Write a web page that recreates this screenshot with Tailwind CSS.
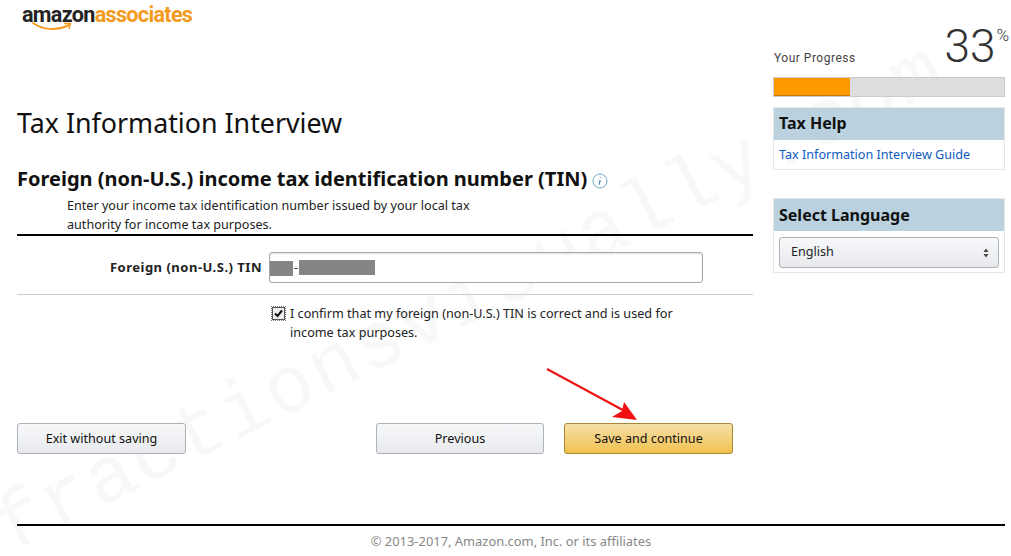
<!DOCTYPE html>
<html lang="en">
<head>
    <meta charset="UTF-8">
    <meta name="viewport" content="width=device-width, initial-scale=1.0">
    <title>Tax Information Interview</title>
    <script src="https://cdn.jsdelivr.net/npm/@tailwindcss/browser@4"></script>
</head>
<body class="bg-white font-['Noto_Sans',sans-serif] text-[#222] overflow-hidden">
    <div class="relative w-[1011px] h-[556px] overflow-hidden">
        <!-- watermark -->
        <div class="absolute left-[-55px] top-[260px] w-[1050px] text-center origin-center rotate-[-26.5deg] font-['Liberation_Mono',monospace] text-[80px] leading-none tracking-[2px] text-[#f8f8f8] whitespace-nowrap pointer-events-none">fractionsvisually.com</div>

        <div class="relative pl-[17px] pr-[6px] flex gap-[20px]">
            <!-- left column -->
            <div class="w-[736px] shrink-0">
                <div class="relative h-[32px] pl-[5px] pt-[1px] text-[21.6px] leading-[28px] font-bold tracking-[-0.7px] font-['Roboto',sans-serif]">
                    <span class="text-[#222]">amazon</span><span class="text-[#f49a1e]">associates</span>
                    <svg class="absolute left-[15px] top-[21px]" width="56" height="11" viewBox="0 0 56 11" fill="none">
                        <path d="M1 2 C 11 9, 25 10, 37 4" stroke="#f49a1e" stroke-width="2" stroke-linecap="round"/>
                        <path d="M32 2.5 L 38.5 2.5 L 37 8" stroke="#f49a1e" stroke-width="1.4" fill="none"/>
                    </svg>
                </div>

                <h1 class="mt-[73px] text-[26.8px] leading-[36px] font-normal text-[#111]">Tax Information Interview</h1>

                <div class="mt-[24px] flex items-center gap-[5px]">
                    <h2 class="text-[20px] leading-[28px] font-bold text-[#111]">Foreign (non-U.S.) income tax identification number (TIN)</h2>
                    <svg class="mt-[3px]" width="16" height="16" viewBox="0 0 16 16" fill="none">
                        <circle cx="8" cy="8" r="7" stroke="#6ea6c6" stroke-width="1"/>
                        <path d="M8.4 4.2v.9M8.2 7l-1 4.6" stroke="#4f8db3" stroke-width="1.3"/>
                    </svg>
                </div>

                <p class="pl-[50px] mt-[3px] w-[500px] text-[12.6px] leading-[19px]">Enter your income tax identification number issued by your local tax authority for income tax purposes.</p>

                <div class="border-t-2 border-black"></div>

                <div class="h-[59px] pt-[16px] flex items-start border-b border-[#ccc]">
                    <label class="w-[245px] mr-[7px] mt-[6px] text-right text-[13px] leading-[18px] tracking-[0.5px] font-bold shrink-0">Foreign (non-U.S.) TIN</label>
                    <div class="w-[434px] h-[31px] border border-[#a6a6a6] rounded-[3px] flex items-center shadow-[inset_0_1px_2px_rgba(0,0,0,0.12)] bg-white">
                        <span class="w-[23px] h-[15px] mt-[1px] bg-[#858585]"></span>
                        <span class="w-[6px] text-[12px] leading-none text-center">-</span>
                        <span class="w-[76px] h-[15px] bg-[#858585]"></span>
                    </div>
                </div>

                <div class="mt-[9px] pl-[255px] flex gap-[5px]">
                    <span class="mt-[3px] w-[13px] h-[13px] shrink-0 border border-[#555] outline-1 outline-dotted outline-[#777] bg-[#eee] flex items-center justify-center">
                        <svg width="11" height="11" viewBox="0 0 11 11" fill="none"><path d="M2 5.5 L4.5 8 L9 2.5" stroke="#111" stroke-width="2"/></svg>
                    </span>
                    <p class="w-[400px] text-[12.65px] leading-[19px]">I confirm that my foreign (non-U.S.) TIN is correct and is used for income tax purposes.</p>
                </div>

                <div class="mt-[81px] flex">
                    <button class="w-[169px] h-[31px] pt-[2px] border border-[#adb1b8] rounded-[3px] bg-gradient-to-b from-[#f7f8fa] to-[#e7e9ec] text-[12.6px] text-[#111]">Exit without saving</button>
                    <button class="ml-[190px] w-[168px] h-[31px] pt-[2px] border border-[#adb1b8] rounded-[3px] bg-gradient-to-b from-[#f7f8fa] to-[#e7e9ec] text-[12.6px] text-[#111]">Previous</button>
                    <button class="ml-[20px] w-[169px] h-[31px] pt-[2px] border border-[#a88734] rounded-[3px] bg-gradient-to-b from-[#f7dfa5] to-[#f0c14b] text-[12.6px] text-[#111]">Save and continue</button>
                </div>
            </div>

            <!-- right column -->
            <aside class="w-[232px] shrink-0">
                <div class="h-[77px] flex justify-between items-start relative">
                    <span class="ml-[1px] mt-[49px] text-[12px] leading-[18px] tracking-[0.5px] font-['Roboto',sans-serif] text-[#444]">Your Progress</span>
                    <div class="mt-[23px] -mr-[4px] flex items-start text-[#333] font-['Roboto',sans-serif] font-light">
                        <span class="text-[46px] leading-[46px]">33</span>
                        <span class="text-[17px] leading-[16px] mt-[4px] ml-[1px]">%</span>
                    </div>
                </div>
                <div class="h-[20px] border border-[#ccc] bg-[#ddd]">
                    <div class="w-[76px] h-full bg-[#ff9900] border-b border-[#c77700]"></div>
                </div>

                <div class="mt-[10px] border border-[#e7e7e7]">
                    <h3 class="h-[32px] pl-[5px] bg-[#bad2df] text-[16px] leading-[30px] font-bold text-[#111]">Tax Help</h3>
                    <a class="block h-[29px] pl-[5px] text-[12.6px] leading-[29px] text-[#0f5bc4]">Tax Information Interview Guide</a>
                </div>

                <div class="mt-[28px] border border-[#e7e7e7]">
                    <h3 class="h-[32px] pl-[5px] bg-[#bad2df] text-[16px] leading-[33px] font-bold text-[#111]">Select Language</h3>
                    <div class="mx-[5px] mt-[6px] mb-[4px] h-[31px] border border-[#adb1b8] rounded-[3px] bg-gradient-to-b from-[#f7f8fa] to-[#e7e9ec] flex items-center justify-between pl-[11px] pr-[9px] text-[12.6px]">
                        <span>English</span>
                        <svg width="6" height="10" viewBox="0 0 6 10" fill="#444"><path d="M3 0.5 L5.5 4 H0.5Z M3 9.5 L0.5 6 H5.5Z"/></svg>
                    </div>
                </div>
            </aside>
        </div>

        <!-- red arrow over the page -->
        <svg class="absolute left-[540px] top-[365px]" width="105" height="60" viewBox="0 0 105 60" fill="none">
            <path d="M7 4 L92 50" stroke="#f01010" stroke-width="2"/>
            <path d="M97 55 L72 52 L82 46 L84 37 Z" fill="#f01010"/>
        </svg>

        <footer class="absolute left-[17px] top-[524px] w-[988px] border-t-2 border-black pt-[6px] text-center text-[12.9px] leading-[18px] text-[#888]">© 2013-2017, Amazon.com, Inc. or its affiliates</footer>
    </div>
</body>
</html>
